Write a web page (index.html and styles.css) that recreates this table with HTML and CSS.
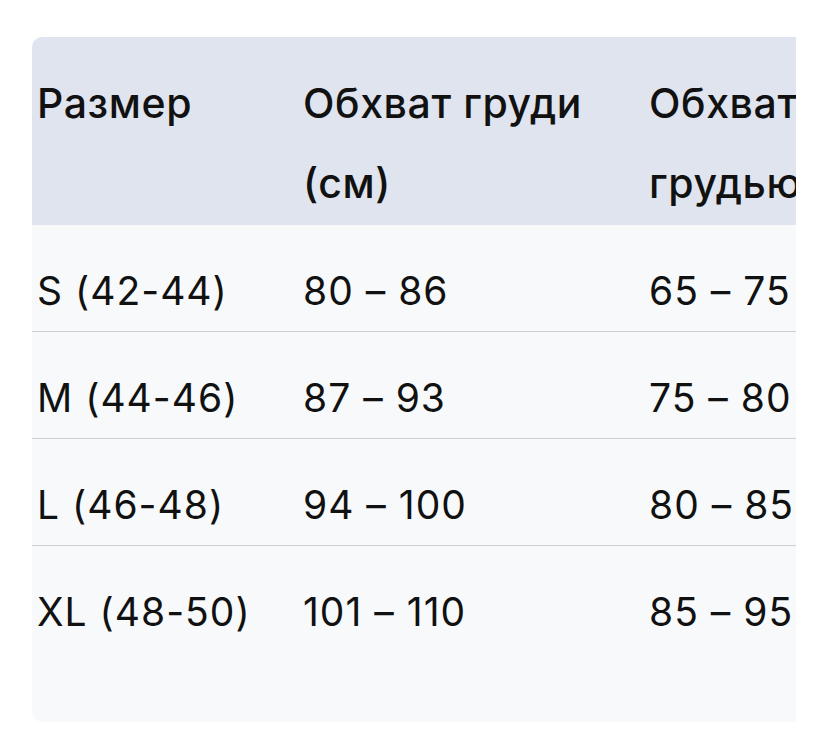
FILE: index.html
```html
<!DOCTYPE html>
<html lang="ru">
<head>
<meta charset="utf-8">
<title>Таблица размеров</title>
<link rel="stylesheet" href="styles.css">
</head>
<body>
<div class="page">
  <div class="table-wrap">
    <table class="sizes">
      <thead>
        <tr>
          <th class="c1">Размер</th>
          <th class="c2">Обхват груди (см)</th>
          <th class="c3">Обхват под грудью (см)</th>
        </tr>
      </thead>
      <tbody>
        <tr><td>S (42-44)</td><td>80 – 86</td><td>65 – 75</td></tr>
        <tr><td>M (44-46)</td><td>87 – 93</td><td>75 – 80</td></tr>
        <tr><td>L (46-48)</td><td>94 – 100</td><td>80 – 85</td></tr>
        <tr class="last"><td>XL (48-50)</td><td>101 – 110</td><td>85 – 95</td></tr>
      </tbody>
    </table>
  </div>
</div>
</body>
</html>
```

FILE: styles.css
```css
html, body {
  margin: 0;
  padding: 0;
  background: #ffffff;
}
.page {
  padding: 37px 32px 0 32px;
}
.table-wrap {
  width: 764px;
  height: 685px;
  overflow: hidden;
  background: #f8f9fb;
  border-radius: 10px 0 0 10px;
}
.sizes {
  border-collapse: collapse;
  table-layout: fixed;
  width: 900px;
  color: #111111;
}
.sizes th {
  background: #dfe4ee;
  font-family: "Inter", "Noto Sans", sans-serif;
  font-weight: 500;
  font-size: 41px;
  letter-spacing: 0.6px;
  line-height: 80px;
  text-align: left;
  vertical-align: top;
  padding: 26px 0 2px 5px;
}
.sizes .c1 { width: 261px; }
.sizes .c2 { width: 341px; }
.sizes .c3 { width: 293px; }
.sizes td {
  font-family: "Inter", "Liberation Sans", sans-serif;
  font-weight: 400;
  font-size: 39px;
  letter-spacing: 1px;
  line-height: 80px;
  padding: 26px 0 0 5px;
  height: 80px;
  vertical-align: top;
  border-bottom: 1px solid #cdcfd3;
  white-space: nowrap;
}
.sizes tr.last td {
  border-bottom: none;
}
```
